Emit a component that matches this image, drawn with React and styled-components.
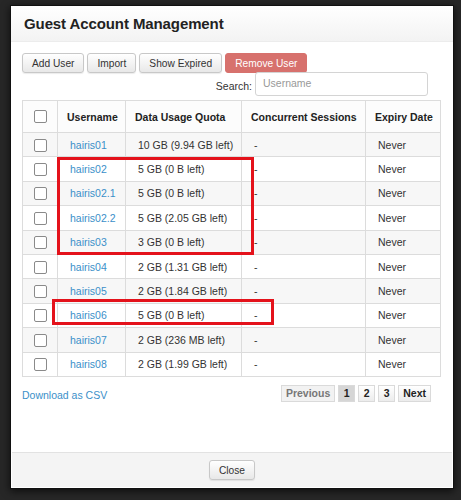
import React from 'react';
import styled, { createGlobalStyle } from 'styled-components';

const Global = createGlobalStyle`
  html, body { margin: 0; padding: 0; }
  body {
    background: #262626;
    font-family: 'Liberation Sans', Arial, sans-serif;
    width: 461px;
    height: 500px;
    overflow: hidden;
  }
`;

const Backdrop = styled.div`
  height: 500px;
  padding: 5px 0 0 10px;
  box-sizing: border-box;
  background: #272727;
`;

const Modal = styled.div`
  width: 444px;
  height: 484px;
  box-sizing: border-box;
  background: #fff;
  border: 1px solid #111;
  box-shadow: 0 2px 8px rgba(0, 0, 0, 0.7);
  display: flex;
  flex-direction: column;
`;

const Header = styled.div`
  height: 35px;
  padding: 0 12px;
  display: flex;
  align-items: center;
  background: linear-gradient(#ffffff, #f3f3f3);
  border-bottom: 1px solid #ececec;
  h2 {
    margin: 0 0 0 1px;
    font-family: 'Liberation Sans', Arial, sans-serif;
    font-weight: 700;
    font-size: 15px;
    letter-spacing: -0.1px;
    color: #222;
  }
`;

const Body = styled.div`
  flex: 1;
  padding: 11px 12px 0 11px;
`;

const Toolbar = styled.div`
  display: flex;
  gap: 3px;
`;

const Btn = styled.button`
  margin: 0;
  height: 20px;
  padding: 0 9px;
  font-family: 'Liberation Sans', Arial, sans-serif;
  font-size: 10.2px;
  color: ${p => (p.$danger ? '#fff' : '#333')};
  background: ${p => (p.$danger ? '#d7716d' : 'linear-gradient(#ffffff, #e8e8e8)')};
  border: 1px solid ${p => (p.$danger ? '#d7716d' : '#c8c8c8')};
  border-radius: 3px;
  box-shadow: ${p => (p.$danger ? 'none' : '0 1px 1px rgba(0,0,0,0.08)')};
  cursor: pointer;
`;

const SearchRow = styled.div`
  display: flex;
  justify-content: flex-end;
  align-items: center;
  gap: 3px;
  margin-top: -1px;
  padding-right: 13px;
  label {
    font-size: 10.5px;
    color: #333;
    margin-top: 4px;
  }
  input {
    width: 173px;
    height: 24px;
    box-sizing: border-box;
    border: 1px solid #d4d4d4;
    border-radius: 3px;
    padding: 0 7px 3px;
    font-family: 'Liberation Sans', Arial, sans-serif;
    font-size: 10.5px;
    outline: none;
  }
  input::placeholder { color: #999; }
`;

const TableWrap = styled.div`
  position: relative;
  margin-top: 4px;
`;

const Table = styled.table`
  width: 418px;
  border-collapse: collapse;
  table-layout: fixed;
  font-size: 10.5px;
  color: #333;
  th, td {
    border: 1px solid #dcdcdc;
    text-align: left;
    white-space: nowrap;
    overflow: hidden;
  }
  th {
    height: 31px;
    padding: 0 9px;
    font-weight: bold;
    color: #222;
    background: #fcfcfc;
  }
  td {
    height: 23.4px;
    padding: 0 0 0 12px;
  }
  tbody tr:nth-child(odd) td { background: #f7f7f7; }
  th:first-child, td:first-child { padding: 0; text-align: center; }
`;

const Check = styled.span`
  display: inline-block;
  width: 11px;
  height: 11px;
  border: 1px solid #8a8a8a;
  border-radius: 2px;
  background: #fff;
  vertical-align: middle;
`;

const Link = styled.a`
  color: #3b8fc9;
  text-decoration: none;
`;

const Highlight = styled.div`
  position: absolute;
  border: 3px solid #e4121b;
  box-sizing: border-box;
  pointer-events: none;
`;

const Bottom = styled.div`
  display: flex;
  justify-content: space-between;
  align-items: flex-start;
  margin-top: 8px;
  padding-right: 10px;
`;

const Csv = styled.a`
  color: #3b8fc9;
  font-size: 10.5px;
  margin-top: 4px;
  text-decoration: none;
`;

const Pager = styled.div`
  display: flex;
  gap: 3px;
`;

const Page = styled.span`
  height: 17px;
  box-sizing: border-box;
  padding: 0 4px;
  min-width: 17px;
  display: flex;
  align-items: center;
  justify-content: center;
  font-size: 10.5px;
  font-weight: bold;
  color: ${p => (p.$muted ? '#777' : '#222')};
  background: ${p => (p.$active ? '#d6d6d6' : p.$muted ? '#f2f2f2' : 'linear-gradient(#ffffff, #ececec)')};
  border: 1px solid #dadada;
`;

const Footer = styled.div`
  height: 35px;
  border-top: 1px solid #e2e2e2;
  background: #f4f4f4;
  display: flex;
  justify-content: center;
  align-items: flex-start;
  padding-top: 7px;
  box-sizing: border-box;
  margin: 0 1px 1px;
`;

const rows = [
  ['hairis01', '10 GB (9.94 GB left)'],
  ['hairis02', '5 GB (0 B left)'],
  ['hairis02.1', '5 GB (0 B left)'],
  ['hairis02.2', '5 GB (2.05 GB left)'],
  ['hairis03', '3 GB (0 B left)'],
  ['hairis04', '2 GB (1.31 GB left)'],
  ['hairis05', '2 GB (1.84 GB left)'],
  ['hairis06', '5 GB (0 B left)'],
  ['hairis07', '2 GB (236 MB left)'],
  ['hairis08', '2 GB (1.99 GB left)'],
];

export default function App() {
  return (
    <>
      <Global />
      <Backdrop>
        <Modal>
          <Header>
            <h2>Guest Account Management</h2>
          </Header>
          <Body>
            <Toolbar>
              <Btn>Add User</Btn>
              <Btn>Import</Btn>
              <Btn>Show Expired</Btn>
              <Btn $danger>Remove User</Btn>
            </Toolbar>
            <SearchRow>
              <label>Search:</label>
              <input placeholder="Username" />
            </SearchRow>
            <TableWrap>
              <Table>
                <colgroup>
                  <col style={{ width: 35 }} />
                  <col style={{ width: 68 }} />
                  <col style={{ width: 116 }} />
                  <col style={{ width: 124 }} />
                  <col style={{ width: 75 }} />
                </colgroup>
                <thead>
                  <tr>
                    <th><Check /></th>
                    <th>Username</th>
                    <th>Data Usage Quota</th>
                    <th>Concurrent Sessions</th>
                    <th>Expiry Date</th>
                  </tr>
                </thead>
                <tbody>
                  {rows.map(([name, quota]) => (
                    <tr key={name}>
                      <td><Check /></td>
                      <td><Link href="#">{name}</Link></td>
                      <td>{quota}</td>
                      <td>-</td>
                      <td>Never</td>
                    </tr>
                  ))}
                </tbody>
              </Table>
              <Highlight style={{ left: 35, top: 57, width: 197, height: 98 }} />
              <Highlight style={{ left: 30, top: 199, width: 222, height: 26 }} />
            </TableWrap>
            <Bottom>
              <Csv href="#">Download as CSV</Csv>
              <Pager>
                <Page $muted>Previous</Page>
                <Page $active>1</Page>
                <Page>2</Page>
                <Page>3</Page>
                <Page>Next</Page>
              </Pager>
            </Bottom>
          </Body>
          <Footer>
            <Btn>Close</Btn>
          </Footer>
        </Modal>
      </Backdrop>
    </>
  );
}
